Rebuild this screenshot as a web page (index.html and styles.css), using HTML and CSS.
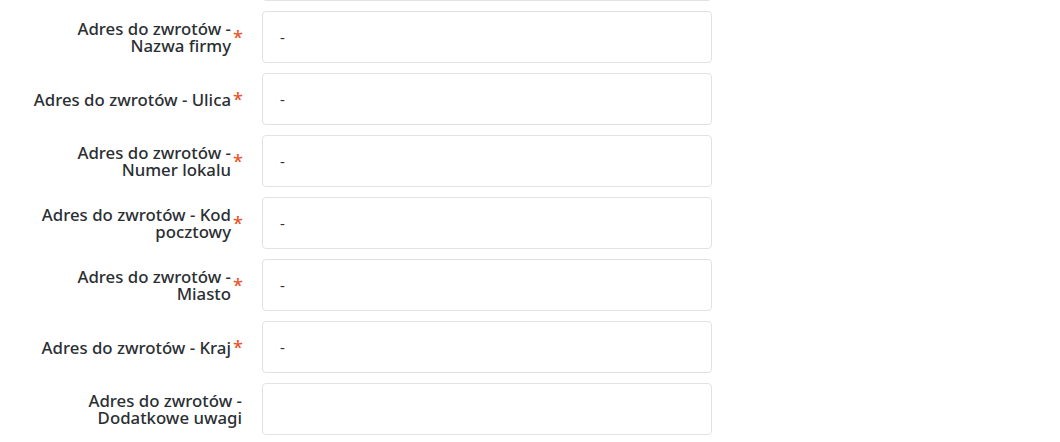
FILE: index.html
```html
<!DOCTYPE html>
<html lang="pl">
<head>
<meta charset="utf-8">
<link rel="stylesheet" href="styles.css">
</head>
<body>
<div class="form">
  <div class="row"><div class="label"></div><div class="input"></div></div>
  <div class="row"><div class="label"><span class="text">Adres do zwrotów -<br>Nazwa firmy</span><span class="req">*</span></div><div class="input">-</div></div>
  <div class="row"><div class="label"><span class="text">Adres do zwrotów - Ulica</span><span class="req">*</span></div><div class="input">-</div></div>
  <div class="row"><div class="label"><span class="text">Adres do zwrotów -<br>Numer lokalu</span><span class="req">*</span></div><div class="input">-</div></div>
  <div class="row"><div class="label"><span class="text">Adres do zwrotów - Kod<br>pocztowy</span><span class="req">*</span></div><div class="input">-</div></div>
  <div class="row"><div class="label"><span class="text">Adres do zwrotów -<br>Miasto</span><span class="req">*</span></div><div class="input">-</div></div>
  <div class="row"><div class="label"><span class="text">Adres do zwrotów - Kraj</span><span class="req">*</span></div><div class="input">-</div></div>
  <div class="row"><div class="label"><span class="text">Adres do zwrotów -<br>Dodatkowe uwagi</span></div><div class="input"></div></div>
</div>
</body>
</html>
```
FILE: styles.css
```css
html, body {
  margin: 0;
  padding: 0;
  background: #ffffff;
}
body {
  font-family: "Noto Sans", "Open Sans", sans-serif;
  color: #2b2f33;
  overflow: hidden;
}
.form {
  display: flex;
  flex-direction: column;
  gap: 10px;
  margin-top: -51px;
}
.row {
  display: grid;
  grid-template-columns: 242px 450px;
  column-gap: 20px;
  align-items: center;
}
.label {
  display: flex;
  justify-content: flex-end;
  align-items: center;
  text-align: right;
  font-size: 16.8px;
  font-weight: 500;
  line-height: 17px;
}
.label .text {
  display: block;
  white-space: nowrap;
}
.req {
  color: #ea5328;
  font-size: 18px;
  line-height: 17px;
  margin-left: 2px;
  width: 9px;
}
.input {
  box-sizing: border-box;
  height: 52px;
  border: 1px solid #dfe3e7;
  border-radius: 4px;
  padding: 0 17px;
  display: flex;
  align-items: center;
  font-size: 15px;
  color: #333;
}
```
